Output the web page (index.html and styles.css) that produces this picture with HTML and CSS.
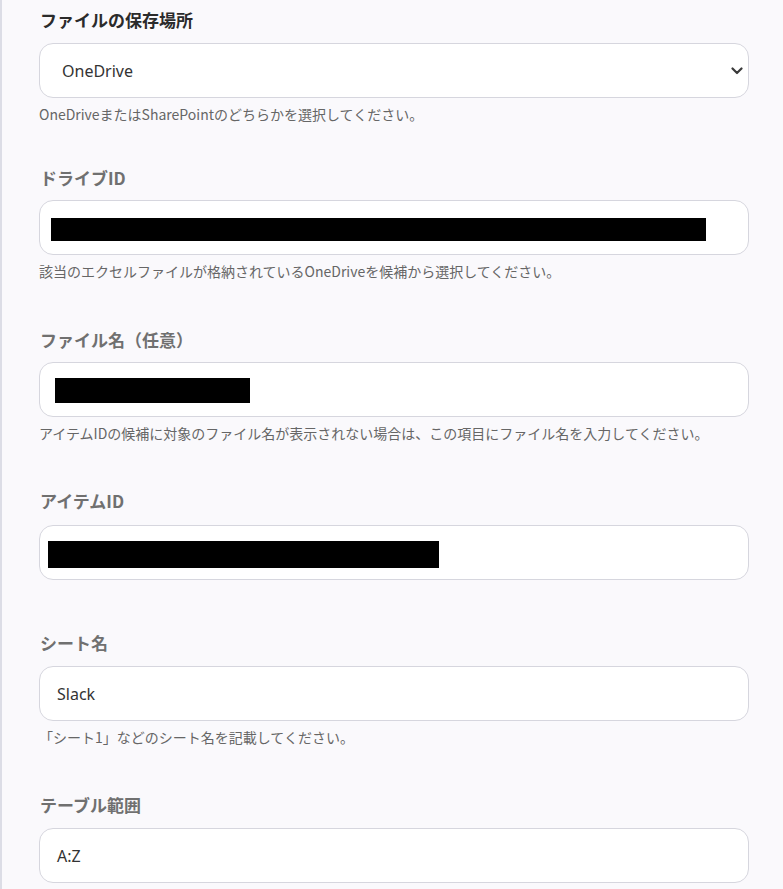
FILE: index.html
```html
<!DOCTYPE html>
<html lang="ja">
<head>
<meta charset="utf-8">
<link rel="stylesheet" href="styles.css">
</head>
<body>
<div class="page">
  <div class="field f1">
    <div class="label label-active">ファイルの保存場所</div>
    <div class="box select">
      <span class="value">OneDrive</span>
      <svg class="chev" width="12" height="8" viewBox="0 0 12 8"><path d="M1.5 1.5 L6 6 L10.5 1.5" fill="none" stroke="#3a3a3a" stroke-width="2.2" stroke-linecap="round" stroke-linejoin="round"/></svg>
    </div>
    <div class="help">OneDriveまたはSharePointのどちらかを選択してください。</div>
  </div>

  <div class="field f2">
    <div class="label">ドライブID</div>
    <div class="box">
      <span class="redact r1"></span>
    </div>
    <div class="help">該当のエクセルファイルが格納されているOneDriveを候補から選択してください。</div>
  </div>

  <div class="field f3">
    <div class="label">ファイル名（任意）</div>
    <div class="box">
      <span class="redact r2"></span>
    </div>
    <div class="help">アイテムIDの候補に対象のファイル名が表示されない場合は、この項目にファイル名を入力してください。</div>
  </div>

  <div class="field f4">
    <div class="label">アイテムID</div>
    <div class="box">
      <span class="redact r3"></span>
    </div>
  </div>

  <div class="field f5">
    <div class="label">シート名</div>
    <div class="box">
      <span class="value v-sm">Slack</span>
    </div>
    <div class="help">「シート1」などのシート名を記載してください。</div>
  </div>

  <div class="field f6">
    <div class="label">テーブル範囲</div>
    <div class="box">
      <span class="value v-sm">A:Z</span>
    </div>
  </div>
</div>
</body>
</html>
```

FILE: styles.css
```css
html, body {
  margin: 0;
  padding: 0;
  background: #faf9fc;
  height: 100%;
  overflow: hidden;
}
.page {
  border-left: 2px solid #dcdde6;
  min-height: 889px;
  box-sizing: border-box;
  padding: 8px 34px 0 37px;
  font-family: "Noto Sans", "Noto Sans CJK JP", sans-serif;
}
.field {
  display: flex;
  flex-direction: column;
}
.f1 { margin-bottom: 43px; }
.f2 { margin-bottom: 48px; }
.f3 { margin-bottom: 47px; }
.f4 { margin-bottom: 51px; }
.f5 { margin-bottom: 47px; }
.label {
  font-family: "Noto Sans CJK JP", sans-serif;
  font-size: 17px;
  font-weight: 700;
  line-height: 24px;
  height: 24px;
  color: #707070;
  margin-left: 1px;
  margin-bottom: 11px;
}
.label-active { color: #2b2b2b; }
.f2 .label, .f3 .label { margin-bottom: 10px; }
.f4 .label { margin-bottom: 12px; }
.box {
  height: 55px;
  box-sizing: border-box;
  background: #ffffff;
  border: 1px solid #d6d6de;
  border-radius: 14px;
  display: flex;
  align-items: center;
  position: relative;
}
.select { justify-content: space-between; padding: 0 4px 0 22px; }
.value {
  font-size: 16px;
  color: #333;
}
.v-sm { margin-left: 17px; }
.chev { margin-right: 1px; margin-top: 0; }
.help {
  font-family: "Noto Sans CJK JP", sans-serif;
  font-size: 14px;
  line-height: 18px;
  color: #666;
  margin-top: 7px;
  margin-left: 0;
}
.redact {
  display: block;
  background: #000;
}
.r1 { width: 655px; height: 23px; margin-left: 11px; margin-top: 4px; }
.r2 { width: 195px; height: 25px; margin-left: 15px; margin-top: 1px; }
.r3 { width: 391px; height: 27px; margin-left: 8px; margin-top: 3px; }
```
